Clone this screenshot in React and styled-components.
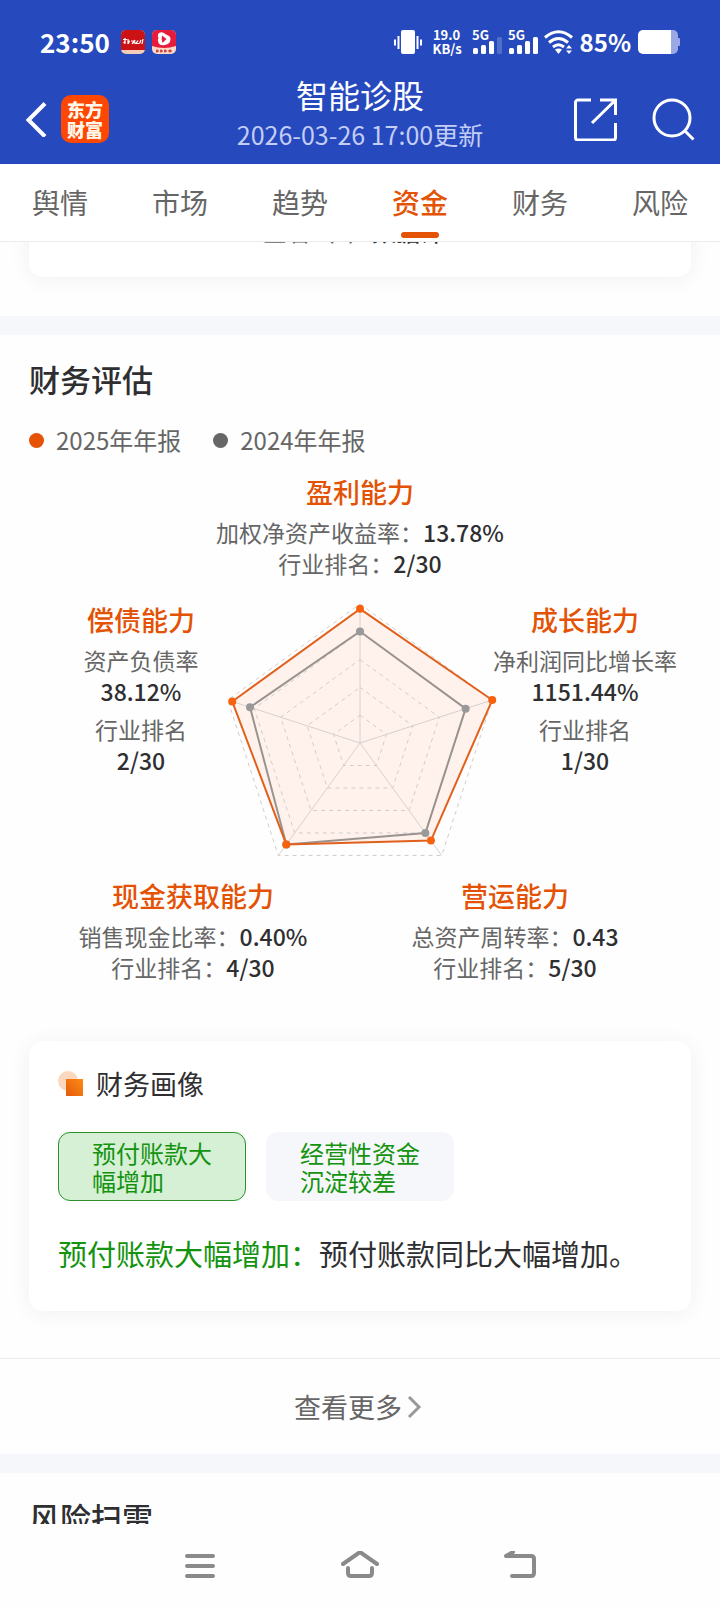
import React from "react";
import styled, { createGlobalStyle } from "styled-components";

const color = {
  blue: "#264abd",
  orange: "#e35205",
  green: "#14930f",
  ink: "#2f2f31",
  grey: "#666",
  band: "#f6f7fa",
};

const GlobalStyle = createGlobalStyle`
  * { box-sizing: border-box; }
  body {
    margin: 0;
    background: #fefefe;
    color: ${color.ink};
    font-family: "Noto Sans CJK SC", "Noto Sans", sans-serif;
  }
  button { font: inherit; color: inherit; border: 0; padding: 0; background: none; cursor: pointer; }
  h1, h2, h3, p, dl, dt, dd { margin: 0; font-weight: 400; }
  svg { display: block; flex: none; }
`;

const Screen = styled.div`
  display: flex;
  flex-direction: column;
  height: 100vh;
`;

const Header = styled.header`
  flex: none;
  background: ${color.blue};
  color: #fff;
`;

const StatusBar = styled.div`
  display: flex;
  justify-content: space-between;
  align-items: center;
  height: 74px;
  padding: 10px 40px 0;
`;

const StatusGroup = styled.div`
  display: flex;
  align-items: center;
  gap: 7px;
`;

const Clock = styled.span`
  font-size: 26px;
  line-height: 30px;
  font-weight: 700;
  margin-right: 4px;
`;

const Percent = styled.span`
  font-size: 24px;
  line-height: 30px;
  font-weight: 700;
`;

const Speed = styled.span`
  width: 28px;
  margin: 0 4px;
  font-size: 13px;
  line-height: 14px;
  font-weight: 700;
  text-align: center;
  white-space: nowrap;
`;

const AppBar = styled.div`
  display: grid;
  grid-template-columns: 1fr auto 1fr;
  align-items: center;
  height: 90px;
  padding: 0 24px;
`;

const BarSide = styled.div`
  display: flex;
  align-items: center;
  justify-content: ${(p) => (p.$end ? "flex-end" : "flex-start")};
  gap: ${(p) => (p.$end ? 34 : 12)}px;
`;

const IconButton = styled.button`
  display: flex;
`;

const BrandButton = styled.button`
  width: 48px;
  height: 48px;
  border-radius: 10px;
  background: #fd4703;
  color: #fff8ea;
  font-size: 18px;
  line-height: 20px;
  font-weight: 900;
  text-align: center;
`;

const TitleBlock = styled.div`
  padding-bottom: 12px;
  text-align: center;
`;

const PageTitle = styled.h1`
  margin-bottom: 2px;
  font-size: 32px;
  line-height: 40px;
`;

const Updated = styled.p`
  font-size: 25px;
  line-height: 36px;
  color: #c3cdf6;
`;

const Tabs = styled.nav`
  flex: none;
  display: grid;
  grid-template-columns: repeat(6, 1fr);
  height: 78px;
  border-bottom: 1px solid #ebebeb;
  background: #fff;
`;

const Tab = styled.button`
  display: flex;
  flex-direction: column;
  align-items: center;
  justify-content: space-between;
  padding: 19px 0 3px;
  font-size: 28px;
  line-height: 38px;
  color: ${(p) => (p.$active ? color.orange : color.grey)};
  font-weight: ${(p) => (p.$active ? 500 : 400)};

  &::after {
    content: "";
    width: 38px;
    height: 6px;
    border-radius: 3px;
    background: ${(p) => (p.$active ? color.orange : "transparent")};
  }
`;

const Content = styled.main`
  flex: 1;
  min-height: 0;
  overflow: hidden;
`;

const PreviousSection = styled.section`
  display: flex;
  flex-direction: column;
  justify-content: flex-end;
  height: 74px;
  padding: 0 29px 39px;
  overflow: hidden;
`;

const Card = styled.article`
  padding: 26px 29px ${(p) => (p.$compact ? 34 : 40)}px;
  border-radius: 14px;
  background: #fff;
  box-shadow: 0 2px 22px rgba(0, 0, 0, 0.06);
`;

const PreviousLink = styled.p`
  font-size: 24px;
  line-height: 24px;
  text-align: center;
  color: ${color.grey};

  b { font-weight: 500; color: ${color.ink}; }
`;

const Band = styled.div`
  height: 19px;
  background: ${color.band};
`;

const SectionTitle = styled.h2`
  padding: 26px 29px 0;
  font-size: 31px;
  line-height: 36px;
  font-weight: 500;
`;

const Legend = styled.div`
  display: flex;
  gap: 32px;
  padding: 26px 29px 0;
  font-size: 24px;
  line-height: 34px;
  color: ${color.grey};
`;

const LegendItem = styled.span`
  display: flex;
  align-items: center;
  gap: 12px;

  &::before {
    content: "";
    width: 15px;
    height: 15px;
    border-radius: 50%;
    background: ${(p) => p.$dot};
  }
`;

const Assessment = styled.div`
  padding: 18px 0 58px;
`;

const ChartRow = styled.div`
  display: grid;
  grid-template-columns: minmax(0, 1fr) 268px minmax(0, 1fr);
  align-items: start;
  margin: 24px 0 20px;
`;

const ChartSide = styled.div`
  padding: ${(p) => (p.$right ? "0 44px 0 0" : "0 0 0 56px")};
`;

const BottomRow = styled.div`
  display: grid;
  grid-template-columns: 1fr 1fr;
  padding: 0 44px 0 32px;
`;

const AbilityBox = styled.div`
  display: flex;
  flex-direction: column;
  align-items: center;
  white-space: nowrap;
`;

const AbilityTitle = styled.h3`
  margin-bottom: 8px;
  font-size: 27px;
  line-height: 34px;
  font-weight: 500;
  color: ${color.orange};
`;

const Metrics = styled.dl`
  display: flex;
  flex-direction: column;
  align-items: center;
  gap: ${(p) => (p.$stacked ? 7 : 0)}px;
`;

const Metric = styled.div`
  display: flex;
  flex-direction: ${(p) => (p.$stacked ? "column" : "row")};
  align-items: center;
  font-size: 23px;
  line-height: 31px;

  dt { color: ${color.grey}; }
  dd { font-weight: 500; }
`;

const CardWrap = styled.div`
  padding: 0 29px 47px;
`;

const CardTitle = styled.h3`
  display: flex;
  align-items: center;
  gap: 13px;
  font-size: 27px;
  line-height: 34px;
`;

const Chips = styled.div`
  display: flex;
  gap: 20px;
  margin: 31px 0 34px;
`;

const Chip = styled.button`
  width: 188px;
  height: 69px;
  padding: 0 33px;
  border: 1px solid ${(p) => (p.$active ? "#2c8f2c" : color.band)};
  border-radius: 12px;
  background: ${(p) => (p.$active ? "#d6f0d6" : color.band)};
  color: ${color.green};
  font-size: 24px;
  line-height: 28px;
  text-align: left;
`;

const Summary = styled.p`
  font-size: 29px;
  line-height: 36px;

  span { color: ${color.green}; }
`;

const MoreButton = styled.button`
  display: flex;
  align-items: center;
  justify-content: center;
  gap: 5px;
  width: 100%;
  height: 96px;
  padding-right: 4px;
  border-top: 1px solid #ececec;
  font-size: 27px;
  line-height: 36px;
  color: ${color.grey};
`;

const SystemNav = styled.nav`
  flex: none;
  display: flex;
  justify-content: center;
  align-items: center;
  gap: 120px;
  height: 84px;
  background: #fefefe;
`;

const tabs = ["舆情", "市场", "趋势", "资金", "财务", "风险"];

const abilities = {
  profit: { title: "盈利能力", metrics: [["加权净资产收益率", "13.78%"], ["行业排名", "2/30"]] },
  debt: { title: "偿债能力", metrics: [["资产负债率", "38.12%"], ["行业排名", "2/30"]] },
  growth: { title: "成长能力", metrics: [["净利润同比增长率", "1151.44%"], ["行业排名", "1/30"]] },
  cash: { title: "现金获取能力", metrics: [["销售现金比率", "0.40%"], ["行业排名", "4/30"]] },
  operation: { title: "营运能力", metrics: [["总资产周转率", "0.43"], ["行业排名", "5/30"]] },
};

function Ability({ data, stacked }) {
  return (
    <AbilityBox>
      <AbilityTitle>{data.title}</AbilityTitle>
      <Metrics $stacked={stacked}>
        {data.metrics.map(([label, value]) => (
          <Metric key={label} $stacked={stacked}>
            <dt>{stacked ? label : `${label}：`}</dt>
            <dd>{value}</dd>
          </Metric>
        ))}
      </Metrics>
    </AbilityBox>
  );
}

const RADIUS = 139;
const CENTER = { x: 134, y: 140 };

// Radar vertex for an axis, clockwise from the top, at a share of the full radius.
function vertex(axis, share) {
  const angle = (axis * 72 * Math.PI) / 180;
  return [
    CENTER.x + Math.sin(angle) * RADIUS * share,
    CENTER.y - Math.cos(angle) * RADIUS * share,
  ];
}

const polygon = (shares) => shares.map((s, i) => vertex(i, s).join(",")).join(" ");
const current = [0.965, 1, 0.868, 0.902, 0.966];
const previous = [0.802, 0.799, 0.8, 0.902, 0.832];

function Radar() {
  return (
    <svg width="268" height="256" viewBox="0 0 268 256" overflow="visible" role="img" aria-label="财务评估">
      <polygon points={polygon(current)} fill="#fff2ec" />
      {[0.2, 0.4, 0.6, 0.8, 1].map((s) => (
        <polygon key={s} points={polygon([s, s, s, s, s])} fill="none" stroke="#d2cdcb" strokeDasharray="4 4" />
      ))}
      {[0, 1, 2, 3, 4].map((i) => {
        const [x, y] = vertex(i, 1);
        return <line key={i} x1={CENTER.x} y1={CENTER.y} x2={x} y2={y} stroke="#d6d0ce" />;
      })}
      <polygon points={polygon(previous)} fill="none" stroke="#999390" strokeWidth="2" />
      {previous.map((s, i) => {
        const [x, y] = vertex(i, s);
        return <circle key={i} cx={x} cy={y} r="4" fill="#999" />;
      })}
      <polygon points={polygon(current)} fill="none" stroke="#e0601c" strokeWidth="2" />
      {current.map((s, i) => {
        const [x, y] = vertex(i, s);
        return <circle key={i} cx={x} cy={y} r="4" fill="#f8610e" />;
      })}
    </svg>
  );
}

function NewsIcon() {
  return (
    <svg width="24" height="24" viewBox="0 0 24 24">
      <rect width="24" height="24" rx="5" fill="#f4cdb8" />
      <path d="M0 20V5a5 5 0 0 1 5-5h14a5 5 0 0 1 5 5v15Z" fill="#cb1215" />
      <path
        d="M2 9.500h4M4 8v6M2.500 13l2-2M7 9v5M8.500 10.500l-1 3M10 11h3l-2 3M14 10l-1 3h2M17 10.500l-2 3h3M20 10l-1.500 3.500M22 9l-1 5"
        fill="none" stroke="#fff" strokeWidth="1.200"
      />
    </svg>
  );
}

function VideoIcon() {
  return (
    <svg width="24" height="24" viewBox="0 0 24 24">
      <rect width="24" height="24" rx="5" fill="#fbd9c8" />
      <path d="M0 16V5a5 5 0 0 1 5-5h14a5 5 0 0 1 5 5v11Q12 20 0 16Z" fill="#e71c3a" />
      <path d="M7 3Q10 1 14 4.500 19 6 18.500 9.500 18 14 13 15 8 16 6.500 13 5 10 6.500 8 5 5 7 3Z" fill="#fff" />
      <path d="M10 5.500l4.500 3.500-4 4Q9 9 10 5.500Z" fill="#e71c3a" />
      <path d="M4 21h3m1 0h3m1 0h3m1 0h4M5 19.500v3M9 19.500v3M13 19.500v3M18 19.500v3" stroke="#c5211f" strokeWidth="1.200" />
    </svg>
  );
}

function VibrateIcon() {
  return (
    <svg width="28" height="24" viewBox="0 0 28 24" fill="#fff">
      <rect x="7" width="14" height="24" rx="2" />
      <path d="M3.500 6h2v13h-2zM0 9.500h2v6H0zM22.500 6h2v13h-2zM26 9.500h2v6h-2z" />
    </svg>
  );
}

function SignalIcon({ level }) {
  const heights = [6, 9, 13, 17];
  return (
    <svg width="29" height="24" viewBox="0 0 29 24" fill="#fff" overflow="visible">
      <text x="0" y="10" fontSize="13" fontWeight="700">5G</text>
      {heights.map((h, i) => (
        <rect key={h} x={1 + i * 8} y={24 - h} width="5" height={h} rx="1.500" opacity={i < level ? 1 : 0.2} />
      ))}
    </svg>
  );
}

function WifiIcon() {
  return (
    <svg width="29" height="24" viewBox="0 0 29 24" fill="none" stroke="#fff" strokeWidth="3">
      <path d="M1 7.500Q14.500-4 28 7.500" />
      <path d="M5 12.500q9.500-8 19 0" />
      <path d="M9 17q5.500-4.500 11 0" />
      <path d="M11 19.500q3.500-2 7 0L14.500 24Z" fill="#fff" stroke="none" />
      <path d="M22 18.500h6L25 15ZM22 20.500h6L25 24Z" fill="#fff" stroke="none" />
    </svg>
  );
}

function BatteryIcon() {
  return (
    <svg width="42" height="24" viewBox="0 0 42 24">
      <path d="M33 0h2a5 5 0 0 1 5 5v3h1a1 1 0 0 1 1 1v6a1 1 0 0 1-1 1h-1v3a5 5 0 0 1-5 5h-2Z" fill="#9aa8e3" />
      <path d="M5 0h28v24H5a5 5 0 0 1-5-5V5a5 5 0 0 1 5-5Z" fill="#fff" />
    </svg>
  );
}

export default function App() {
  return (
    <Screen>
      <GlobalStyle />
      <Header>
        <StatusBar>
          <StatusGroup>
            <Clock>23:50</Clock>
            <NewsIcon />
            <VideoIcon />
          </StatusGroup>
          <StatusGroup>
            <VibrateIcon />
            <Speed>19.0<br />KB/s</Speed>
            <SignalIcon level={3} />
            <SignalIcon level={4} />
            <WifiIcon />
            <Percent>85%</Percent>
            <BatteryIcon />
          </StatusGroup>
        </StatusBar>
        <AppBar>
          <BarSide>
            <IconButton aria-label="返回">
              <svg width="25" height="36" viewBox="0 0 25 36" fill="none" stroke="#fff" strokeWidth="4">
                <path d="M21 2.500 4.500 19 21 35.500" />
              </svg>
            </IconButton>
            <BrandButton>东方<br />财富</BrandButton>
          </BarSide>
          <TitleBlock>
            <PageTitle>智能诊股</PageTitle>
            <Updated>2026-03-26 17:00更新</Updated>
          </TitleBlock>
          <BarSide $end>
            <IconButton aria-label="分享">
              <svg width="44" height="44" viewBox="0 0 44 44" fill="none" stroke="#fff" strokeWidth="3">
                <path d="M17 3H4a2.500 2.500 0 0 0-2.500 2.500v35A2.500 2.500 0 0 0 4 43h35a2.500 2.500 0 0 0 2.500-2.500V26" />
                <path d="M26 3h15.500v15M41 3.500 18 26" />
              </svg>
            </IconButton>
            <IconButton aria-label="搜索">
              <svg width="44" height="44" viewBox="0 0 44 44" fill="none" stroke="#fff" strokeWidth="3">
                <circle cx="20" cy="21" r="18" />
                <path d="m33 34 8.500 8.500" />
              </svg>
            </IconButton>
          </BarSide>
        </AppBar>
      </Header>

      <Tabs>
        {tabs.map((name) => (
          <Tab key={name} $active={name === "资金"}>{name}</Tab>
        ))}
      </Tabs>

      <Content>
        <PreviousSection>
          <Card $compact>
            <PreviousLink>查看（2）<b>数据详</b>&gt;</PreviousLink>
          </Card>
        </PreviousSection>
        <Band />
        <section>
          <SectionTitle>财务评估</SectionTitle>
          <Legend>
            <LegendItem $dot={color.orange}>2025年年报</LegendItem>
            <LegendItem $dot={color.grey}>2024年年报</LegendItem>
          </Legend>
          <Assessment>
            <Ability data={abilities.profit} />
            <ChartRow>
              <ChartSide><Ability data={abilities.debt} stacked /></ChartSide>
              <Radar />
              <ChartSide $right><Ability data={abilities.growth} stacked /></ChartSide>
            </ChartRow>
            <BottomRow>
              <Ability data={abilities.cash} />
              <Ability data={abilities.operation} />
            </BottomRow>
          </Assessment>
          <CardWrap>
            <Card>
              <CardTitle>
                <svg width="25" height="26" viewBox="0 0 25 26">
                  <defs>
                    <linearGradient id="tile" x1="1" y1="0" x2="0" y2="1">
                      <stop offset="0" stopColor="#fb8c15" />
                      <stop offset="1" stopColor="#e55b0b" />
                    </linearGradient>
                  </defs>
                  <circle cx="10" cy="10" r="10" fill="#fbd7bd" />
                  <rect x="8" y="8" width="17" height="17" fill="url(#tile)" />
                </svg>
                财务画像
              </CardTitle>
              <Chips>
                <Chip $active>预付账款大幅增加</Chip>
                <Chip>经营性资金沉淀较差</Chip>
              </Chips>
              <Summary><span>预付账款大幅增加：</span>预付账款同比大幅增加。</Summary>
            </Card>
          </CardWrap>
          <MoreButton>
            查看更多
            <svg width="15" height="24" viewBox="0 0 15 24" fill="none" stroke="#999" strokeWidth="3">
              <path d="m2 2 10 10L2 22" />
            </svg>
          </MoreButton>
        </section>
        <Band />
        <section>
          <SectionTitle>风险扫雷</SectionTitle>
        </section>
      </Content>

      <SystemNav>
        <IconButton aria-label="最近任务">
          <svg width="40" height="30" viewBox="0 0 40 30" stroke="#8a8a8a" strokeWidth="4" strokeLinecap="round">
            <path d="M7 5h26M7 15h26M7 25h26" />
          </svg>
        </IconButton>
        <IconButton aria-label="主屏幕">
          <svg width="40" height="30" viewBox="0 0 40 30" fill="none" stroke="#8a8a8a" strokeWidth="4" strokeLinecap="round" strokeLinejoin="round">
            <path d="M3 13 20 1l17 12M8 17v5q0 3 3 3h18q3 0 3-3v-5" />
          </svg>
        </IconButton>
        <IconButton aria-label="后退">
          <svg width="40" height="30" viewBox="0 0 40 30" fill="none" stroke="#8a8a8a" strokeWidth="4" strokeLinecap="round" strokeLinejoin="round">
            <path d="M13 1 6 5h25q3 0 3 3v14q0 3-3 3H12" />
          </svg>
        </IconButton>
      </SystemNav>
    </Screen>
  );
}
